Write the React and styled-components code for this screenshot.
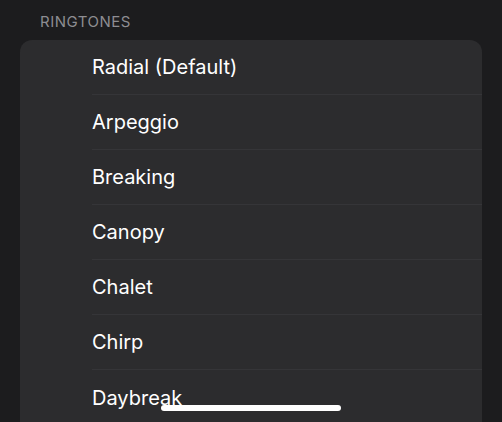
import React from 'react';
import styled, { createGlobalStyle } from 'styled-components';

const GlobalStyle = createGlobalStyle`
  html, body {
    margin: 0;
    padding: 0;
    background: #1c1c1e;
    font-family: Inter, "Liberation Sans", sans-serif;
    -webkit-font-smoothing: antialiased;
  }
`;

const Page = styled.div`
  width: 502px;
  height: 422px;
  overflow: hidden;
  position: relative;
  background: #1c1c1e;
  padding: 0 20px;
  box-sizing: border-box;
`;

const SectionHeader = styled.div`
  padding: 13px 0 0 20px;
  height: 28px;
  box-sizing: border-box;
  font-size: 15px;
  line-height: 17px;
  letter-spacing: 0.5px;
  color: #8d8d92;
  text-transform: uppercase;
`;

const Card = styled.ul`
  list-style: none;
  margin: 12px 0 0;
  padding: 0;
  background: #2c2c2e;
  border-radius: 12px 12px 0 0;
`;

const Row = styled.li`
  height: 55px;
  margin-left: 72px;
  display: flex;
  align-items: center;
  font-size: 20px;
  color: #ffffff;
  border-bottom: ${p => (p.$last ? 'none' : '1px solid #353538')};
  box-sizing: border-box;
`;

const HomeIndicator = styled.div`
  position: absolute;
  left: 161px;
  top: 405px;
  width: 180px;
  height: 6px;
  border-radius: 3px;
  background: #ffffff;
`;

const tones = ['Radial (Default)', 'Arpeggio', 'Breaking', 'Canopy', 'Chalet', 'Chirp', 'Daybreak'];

export default function App() {
  return (
    <Page>
      <GlobalStyle />
      <SectionHeader>Ringtones</SectionHeader>
      <Card>
        {tones.map((t, i) => (
          <Row key={t} $last={i === tones.length - 1}>{t}</Row>
        ))}
      </Card>
      <HomeIndicator />
    </Page>
  );
}
